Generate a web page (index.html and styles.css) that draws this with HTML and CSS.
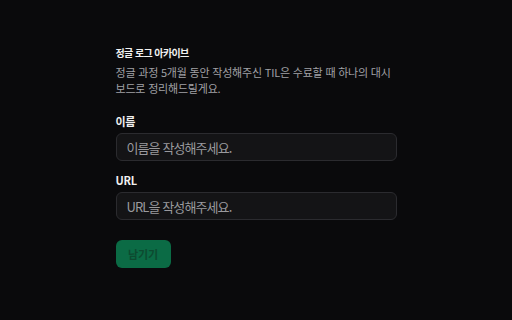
FILE: index.html
```html
<!DOCTYPE html>
<html lang="ko">
<head>
<meta charset="utf-8">
<link rel="stylesheet" href="styles.css">
</head>
<body>
<main class="page">
  <form class="form">
    <header class="intro">
      <h1 class="title">정글 로그 아카이브</h1>
      <p class="desc">정글 과정 5개월 동안 작성해주신 TIL은 수료할 때 하나의 대시보드로 정리해드릴게요.</p>
    </header>
    <div class="field">
      <label class="label" for="name">이름</label>
      <input class="input" id="name" type="text" placeholder="이름을 작성해주세요.">
    </div>
    <div class="field field-url">
      <label class="label" for="url">URL</label>
      <input class="input" id="url" type="text" placeholder="URL을 작성해주세요.">
    </div>
    <div class="actions">
      <button class="btn" type="button">남기기</button>
    </div>
  </form>
</main>
</body>
</html>
```
FILE: styles.css
```css
* { box-sizing: border-box; }
html, body {
  margin: 0;
  padding: 0;
  background: #0a0a0c;
  height: 100%;
}
body {
  font-family: "Noto Sans CJK KR", "Noto Sans", sans-serif;
  color: #ededed;
}
.page {
  display: flex;
  justify-content: center;
  padding-top: 46px;
}
.form {
  width: 281px;
  display: flex;
  flex-direction: column;
}
.intro {
  display: flex;
  flex-direction: column;
  gap: 4px;
}
.title {
  margin: 0;
  font-size: 10px;
  line-height: 14px;
  font-weight: 700;
  letter-spacing: -0.6px;
  color: #f2f2f2;
}
.desc {
  margin: 0;
  font-size: 11px;
  line-height: 16px;
  letter-spacing: -0.2px;
  color: #a1a1a6;
}
.field {
  display: flex;
  flex-direction: column;
  gap: 4px;
  margin-top: 17px;
}
.field-url { margin-top: 11px; }
.label {
  font-size: 11px;
  line-height: 16px;
  font-weight: 700;
  letter-spacing: -0.3px;
  color: #f0f0f0;
}
.input {
  height: 28px;
  width: 100%;
  background: #141416;
  border: 1px solid #2b2b2f;
  border-radius: 6px;
  padding: 0 10px;
  font-family: inherit;
  font-size: 13px;
  letter-spacing: -0.9px;
  color: #d0d0d0;
  outline: none;
}
.input::placeholder { color: #9a9a9e; }
.actions { margin-top: 20px; }
.btn {
  width: 55px;
  height: 28px;
  border: none;
  border-radius: 6px;
  background: #0b6b45;
  color: #0d4a30;
  font-family: inherit;
  font-size: 11px;
  font-weight: 700;
  letter-spacing: -0.2px;
  padding: 0;
}
```
